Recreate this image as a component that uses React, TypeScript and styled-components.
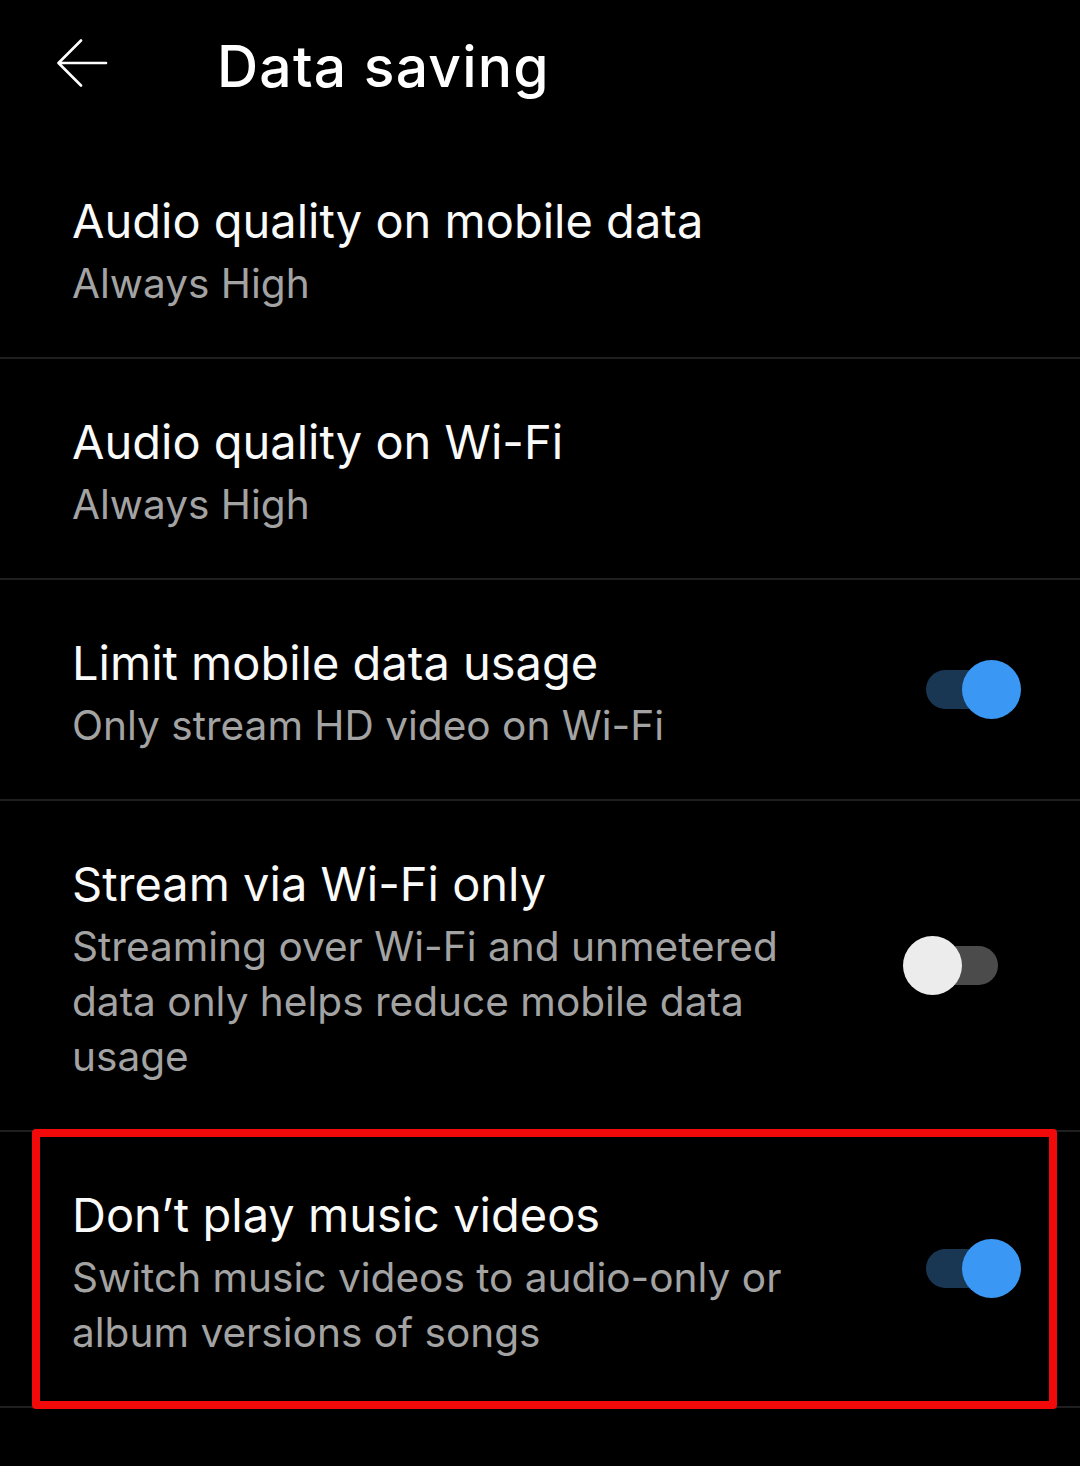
import React from "react";
import styled, { createGlobalStyle } from "styled-components";

const GlobalStyle = createGlobalStyle`
  html, body {
    margin: 0;
    padding: 0;
    background: #000;
  }
  #root {
    min-height: 1466px;
    background: #000;
  }
`;

const Screen = styled.div`
  width: 1080px;
  min-height: 1466px;
  background: #000;
  color: #fff;
  font-family: Inter, Roboto, "Noto Sans", sans-serif;
  display: flex;
  flex-direction: column;
`;

const Header = styled.header`
  height: 128px;
  margin-bottom: 10px;
  display: flex;
  align-items: center;
  padding-left: 56px;
  box-sizing: border-box;
`;

const BackButton = styled.button`
  width: 52px;
  height: 50px;
  padding: 0;
  border: none;
  background: transparent;
  display: flex;
  align-items: center;
  justify-content: center;
  margin-right: 109px;
`;

const Title = styled.h1`
  margin: 6px 0 0 0;
  font-size: 57px;
  font-weight: 500;
  line-height: 68px;
  color: #fff;
  letter-spacing: 1.2px;
`;

const Row = styled.div`
  position: relative;
  display: flex;
  align-items: center;
  padding: 0 59px 0 72px;
  border-bottom: 2px solid #1f1f1f;
`;

const TextBlock = styled.div`
  flex: 1;
  display: flex;
  flex-direction: column;
  gap: 6px;
  padding: 54px 0 46px;
`;

const RowTitle = styled.div`
  font-size: 47px;
  line-height: 58px;
  color: #fafafa;
`;

const RowSub = styled.div`
  font-size: 40.6px;
  line-height: 55px;
  color: #a3a3a3;
`;

const SwitchBox = styled.div`
  position: relative;
  width: 100px;
  height: 60px;
  flex: none;
  margin-left: 24px;
`;

const Track = styled.div<{ $on: boolean }>`
  position: absolute;
  left: 5px;
  top: 10px;
  width: 72px;
  height: 39px;
  border-radius: 20px;
  background: ${(p) => (p.$on ? "#193753" : "#4b4b4b")};
`;

const Thumb = styled.div<{ $on: boolean }>`
  position: absolute;
  top: 0;
  left: ${(p) => (p.$on ? "41px" : "-18px")};
  width: 59px;
  height: 59px;
  border-radius: 50%;
  background: ${(p) => (p.$on ? "#3a98f4" : "#ececec")};
`;

const Highlight = styled.div`
  position: absolute;
  left: 32px;
  right: 23px;
  top: -3px;
  bottom: -3px;
  border: 8px solid #f20a0a;
  border-radius: 4px;
  pointer-events: none;
`;

const Switch = ({ on }: { on: boolean }) => (
  <SwitchBox>
    <Track $on={on} />
    <Thumb $on={on} />
  </SwitchBox>
);

const BackArrow = () => (
  <svg width="52" height="50" viewBox="0 0 52 50" fill="none">
    <path
      d="M3 24 H50 M25 1.5 L2.5 24 L25 46.5"
      stroke="#fff"
      strokeWidth="2.6"
      strokeLinecap="round"
      strokeLinejoin="round"
    />
  </svg>
);

type Item = {
  title: string;
  lines: string[];
  toggle?: boolean;
  highlight?: boolean;
};

const items: Item[] = [
  { title: "Audio quality on mobile data", lines: ["Always High"] },
  { title: "Audio quality on Wi-Fi", lines: ["Always High"] },
  {
    title: "Limit mobile data usage",
    lines: ["Only stream HD video on Wi-Fi"],
    toggle: true,
  },
  {
    title: "Stream via Wi-Fi only",
    lines: [
      "Streaming over Wi-Fi and unmetered",
      "data only helps reduce mobile data",
      "usage",
    ],
    toggle: false,
  },
  {
    title: "Don\u2019t play music videos",
    lines: ["Switch music videos to audio-only or", "album versions of songs"],
    toggle: true,
    highlight: true,
  },
];

export default function App() {
  return (
    <>
      <GlobalStyle />
      <Screen>
        <Header>
          <BackButton aria-label="Back">
            <BackArrow />
          </BackButton>
          <Title>Data saving</Title>
        </Header>
        {items.map((it) => (
          <Row key={it.title}>
            <TextBlock>
              <RowTitle>{it.title}</RowTitle>
              <RowSub>
                {it.lines.map((l, i) => (
                  <div key={i}>{l}</div>
                ))}
              </RowSub>
            </TextBlock>
            {it.toggle !== undefined && <Switch on={it.toggle} />}
            {it.highlight && <Highlight />}
          </Row>
        ))}
      </Screen>
    </>
  );
}
